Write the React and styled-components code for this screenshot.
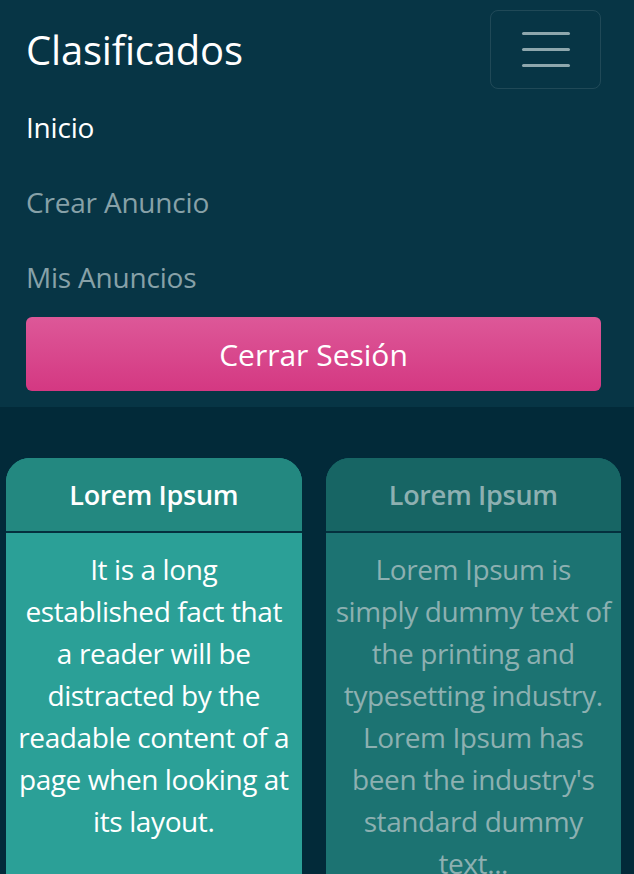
import React from "react";
import styled, { createGlobalStyle } from "styled-components";

const GlobalStyle = createGlobalStyle`
  html, body {
    margin: 0;
    padding: 0;
    background-color: #022a39;
    font-family: "Open Sans", Lato, sans-serif;
  }
`;

const Navbar = styled.nav`
  background-color: #073545;
  padding: 10px 33px 16px 26px;
`;

const BrandRow = styled.div`
  display: flex;
  justify-content: space-between;
  align-items: center;
`;

const Brand = styled.a`
  color: #ffffff;
  font-size: 40px;
  letter-spacing: -0.2px;
  text-decoration: none;
`;

const Toggler = styled.button`
  display: flex;
  flex-direction: column;
  justify-content: center;
  align-items: center;
  gap: 13px;
  width: 111px;
  height: 79px;
  background: transparent;
  border: 1px solid rgba(255, 255, 255, 0.1);
  border-radius: 8px;
  padding: 0;
`;

const TogglerLine = styled.span`
  display: block;
  width: 48px;
  height: 3px;
  border-radius: 2px;
  background-color: #8ea7ad;
`;

const NavList = styled.ul`
  list-style: none;
  margin: 0;
  padding: 0;
`;

const NavLink = styled.li`
  height: 75px;
  display: flex;
  align-items: center;
  font-size: 28px;
  letter-spacing: -0.2px;
  color: ${(p) => (p.$active ? "#ffffff" : "#87a1a8")};
`;

const LogoutButton = styled.button`
  display: block;
  width: 100%;
  height: 74px;
  margin-top: 3px;
  border: none;
  border-radius: 6px;
  background: linear-gradient(180deg, #dd5898 0%, #d43882 100%);
  color: #ffffff;
  font-family: inherit;
  font-size: 30px;
`;

const CardGrid = styled.section`
  display: grid;
  grid-template-columns: 1fr 1fr;
  gap: 24px;
  padding: 51px 13px 0 6px;
`;

const Card = styled.article`
  border-radius: 24px 24px 0 0;
  overflow: hidden;
  background-color: ${(p) => (p.$dim ? "#1c7372" : "#2ba097")};
  color: ${(p) => (p.$dim ? "#8db0b1" : "#ffffff")};
  text-align: center;
`;

const CardHeader = styled.header`
  height: 73px;
  display: flex;
  align-items: center;
  justify-content: center;
  font-size: 27px;
  font-weight: 600;
  letter-spacing: -0.3px;
  background-color: ${(p) => (p.$dim ? "#176564" : "#238880")};
  border-bottom: 2px solid #04303e;
`;

const CardBody = styled.p`
  margin: 0;
  padding: 15px ${(p) => p.$inset}px 80px;
  font-size: 28px;
  line-height: 42px;
  letter-spacing: -0.4px;
`;

const cards = [
  {
    title: "Lorem Ipsum",
    text: "It is a long established fact that a reader will be distracted by the readable content of a page when looking at its layout.",
    inset: 11,
  },
  {
    title: "Lorem Ipsum",
    text: "Lorem Ipsum is simply dummy text of the printing and typesetting industry. Lorem Ipsum has been the industry's standard dummy text...",
    inset: 8,
    dim: true,
  },
];

const App = () => {
  return (
    <>
      <GlobalStyle />
      <Navbar>
        <BrandRow>
          <Brand>Clasificados</Brand>
          <Toggler aria-label="menu">
            <TogglerLine />
            <TogglerLine />
            <TogglerLine />
          </Toggler>
        </BrandRow>
        <NavList>
          <NavLink $active>Inicio</NavLink>
          <NavLink>Crear Anuncio</NavLink>
          <NavLink>Mis Anuncios</NavLink>
        </NavList>
        <LogoutButton>Cerrar Sesión</LogoutButton>
      </Navbar>
      <CardGrid>
        {cards.map((card, i) => (
          <Card key={i} $dim={card.dim}>
            <CardHeader $dim={card.dim}>{card.title}</CardHeader>
            <CardBody $inset={card.inset}>{card.text}</CardBody>
          </Card>
        ))}
      </CardGrid>
    </>
  );
};

export default App;
